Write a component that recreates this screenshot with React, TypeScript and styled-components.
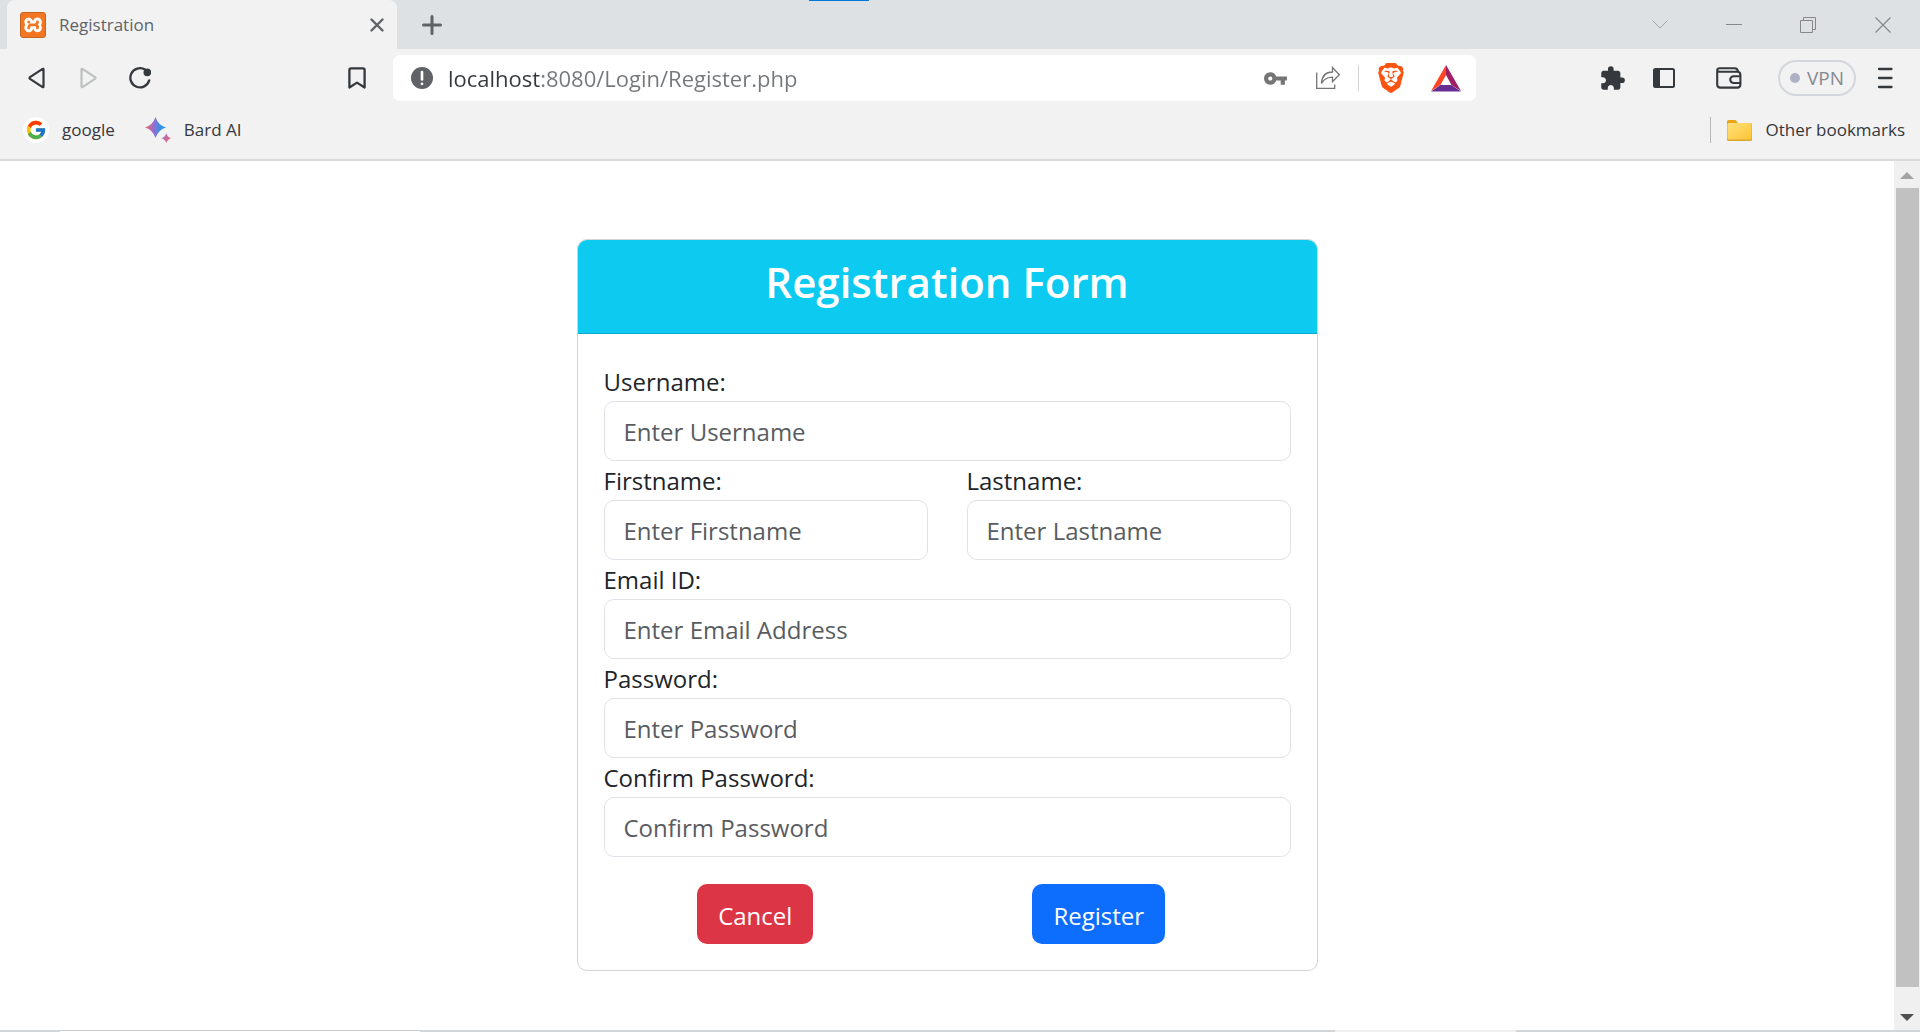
import React from 'react';
import styled, { createGlobalStyle } from 'styled-components';
import { SiBrave, SiXampp } from 'react-icons/si';
import { FcGoogle } from 'react-icons/fc';
import { MdVpnKey, MdExtension } from 'react-icons/md';

const GlobalStyle = createGlobalStyle`
  *, *::before, *::after { box-sizing: border-box; }
  html, body, #root { height: 100%; }
  body {
    margin: 0;
    background: #fff;
    color: #212529;
    font-family: 'Open Sans', 'Noto Sans', sans-serif;
    overflow: hidden;
  }
  button, input { font-family: inherit; }
`;

const Window = styled.div`
  display: flex;
  flex-direction: column;
  height: 100%;
`;

const TabStrip = styled.header`
  position: relative;
  display: flex;
  align-items: stretch;
  height: 49px;
  padding-left: 7px;
  background: #dee1e4;
`;

const LoadMark = styled.div`
  position: absolute;
  top: 0;
  left: 809px;
  width: 60px;
  height: 1px;
  background: #0078d7;
`;

const Tab = styled.div`
  display: flex;
  align-items: center;
  gap: 13px;
  width: 390px;
  padding: 0 6px 0 13px;
  border-radius: 8px 8px 0 0;
  background: #f2f2f2;
`;

const TabTitle = styled.span`
  flex: 1;
  color: #5f6368;
  font-size: 17px;
  line-height: 24px;
`;

const Favicon = styled.span`
  display: flex;
  align-items: center;
  justify-content: center;
  width: 26px;
  height: 26px;
  border: 1px solid #c4651f;
  border-radius: 3px;
  background: linear-gradient(#fff, #fff) center / 20px 20px no-repeat #f37623;
  color: #f37623;
`;

const IconButton = styled.button<{ $width?: number; $color?: string }>`
  display: flex;
  align-items: center;
  justify-content: center;
  flex: none;
  width: ${(p) => p.$width ?? 44}px;
  height: 40px;
  padding: 0;
  border: 0;
  background: transparent;
  color: ${(p) => p.$color ?? '#35383c'};
`;

const TabButton = styled(IconButton)`
  align-self: center;
`;

const WindowControls = styled.div`
  display: flex;
  align-items: center;
  margin-left: auto;
`;

const Toolbar = styled.nav`
  display: flex;
  align-items: center;
  height: 58px;
  padding: 0 13px 0 14px;
  background: #f2f2f2;
`;

const NavButtons = styled.div`
  display: flex;
  gap: 8px;
  width: 365px;
  margin-right: 14px;

  & > :last-child { margin-left: auto; }
`;

const AddressBar = styled.div`
  display: flex;
  flex: 1;
  align-items: center;
  height: 46px;
  padding: 0 6px 0 18px;
  border-radius: 7px;
  background: #fff;
`;

const AddressInput = styled.input`
  flex: 1;
  min-width: 0;
  margin-left: 15px;
  padding: 0;
  border: 0;
  outline: 0;
  font-size: 22px;
  line-height: 32px;
  color: #75787b;
  background: linear-gradient(90deg, #35383c 94px, #75787b 94px);
  background-clip: text;
  -webkit-background-clip: text;
  -webkit-text-fill-color: transparent;
`;

const Divider = styled.span<{ $color: string }>`
  flex: none;
  width: 1px;
  height: 26px;
  background: ${(p) => p.$color};
`;

const Actions = styled.div`
  display: flex;
  align-items: center;
  margin-left: 114px;
`;

const ActionGroup = styled.div`
  display: flex;
  gap: 8px;
  margin-right: 21px;
`;

const VpnButton = styled.button`
  display: flex;
  align-items: center;
  justify-content: center;
  gap: 7px;
  width: 78px;
  height: 36px;
  margin: 0 7px 0 27px;
  padding: 0;
  border: 2px solid #d3d7dc;
  border-radius: 18px;
  background: transparent;
  color: #868a90;
  font-size: 19px;
  line-height: 24px;
`;

const VpnDot = styled.span`
  width: 10px;
  height: 10px;
  border-radius: 50%;
  background: #aeb0c4;
`;

const Bookmarks = styled.nav`
  display: flex;
  align-items: center;
  height: 54px;
  padding: 0 15px 6px 23px;
  border-bottom: 2px solid #d6d8db;
  background: #f2f2f2;
`;

const Bookmark = styled.a`
  display: flex;
  align-items: center;
  gap: 13px;
  margin-right: 30px;
  color: #35383c;
  font-size: 17px;
  line-height: 24px;
  text-decoration: none;

  &:last-child { margin: 0 0 0 16px; }
`;

const RoundIcon = styled.span`
  display: flex;
  align-items: center;
  justify-content: center;
  width: 26px;
  height: 26px;
  border-radius: 50%;
  background: #fff;
`;

const Spacer = styled.span`
  flex: 1;
`;

const Viewport = styled.div`
  display: flex;
  flex: 1;
  min-height: 0;
`;

const Page = styled.main`
  flex: 1;
  padding: 78px 24px 0;
  overflow: hidden;
`;

const Scrollbar = styled.div`
  display: flex;
  flex-direction: column;
  width: 26px;
  background: #f0f0f0;
`;

const ScrollThumb = styled.div`
  flex: 1;
  margin: 0 1px 16px 2px;
  background: #c1c1c1;
`;

const ScrollArrow = styled.button<{ $color: string }>`
  display: flex;
  align-items: center;
  justify-content: center;
  height: 27px;
  padding: 2px 0 0;
  border: 0;
  background: transparent;
  color: ${(p) => p.$color};
`;

const Shelf = styled.footer`
  display: flex;
  justify-content: space-between;
  height: 2px;
  padding: 0 404px 0 60px;
  background: #d2d6d9;
`;

const ShelfItem = styled.span<{ $width: number; $top: string; $fill: string }>`
  width: ${(p) => p.$width}px;
  border-top: 1px solid ${(p) => p.$top};
  background: ${(p) => p.$fill};
`;

const Card = styled.section`
  max-width: 741px;
  margin: 0 auto;
  border: 1px solid #d3d3d4;
  border-radius: 10px;
  overflow: hidden;
`;

const CardHeader = styled.div`
  padding: 14px 26px 23px;
  border-bottom: 1px solid #0ca9ca;
  background: #0dcaf0;
`;

const Title = styled.h1`
  margin: 0;
  color: #fff;
  font-size: 42px;
  font-weight: 600;
  line-height: 56px;
  text-align: center;
`;

const Form = styled.form`
  padding: 28px 26px 26px;
`;

const Row = styled.div`
  display: grid;
  grid-template-columns: 1fr 1fr;
  column-gap: 39px;
`;

const Field = styled.label`
  display: block;
  min-width: 0;
  font-size: 24px;
  line-height: 39px;
`;

const TextInput = styled.input`
  display: block;
  width: 100%;
  height: 60px;
  padding: 0 19px;
  border: 1px solid #dee2e6;
  border-radius: 10px;
  outline: 0;
  background: #fff;
  color: #212529;
  font-size: 24px;
  line-height: 36px;

  &::placeholder {
    color: #595c5f;
    opacity: 1;
  }
`;

const ButtonRow = styled.div`
  display: grid;
  grid-template-columns: 1fr 1fr;
  margin-top: 27px;
`;

const ButtonCell = styled.div`
  display: flex;
  justify-content: center;
  padding-right: 40px;
`;

const FormButton = styled.button<{ $color: string }>`
  height: 60px;
  padding: 4px 21px 0;
  border: 0;
  border-radius: 10px;
  background: ${(p) => p.$color};
  color: #fff;
  font-size: 24px;
  line-height: 36px;
`;

const CrossIcon = () => (
  <svg width="14" height="14" viewBox="0 0 14 14" stroke="currentColor" strokeWidth="2.4" strokeLinecap="round">
    <path d="M1.5 1.5l11 11M12.5 1.5l-11 11" />
  </svg>
);

const PlusIcon = () => (
  <svg width="20" height="20" viewBox="0 0 20 20" stroke="currentColor" strokeWidth="3" strokeLinecap="round">
    <path d="M10 1.5v17M1.5 10h17" />
  </svg>
);

const ChevronIcon = () => (
  <svg width="16" height="9" viewBox="0 0 16 9" fill="none" stroke="currentColor" strokeWidth="1">
    <path d="M0.5 0.5L8 8L15.5 0.5" />
  </svg>
);

const MinimizeIcon = () => (
  <svg width="16" height="1" viewBox="0 0 16 1"><path d="M0 0h16v1H0z" fill="currentColor" /></svg>
);

const RestoreIcon = () => (
  <svg width="16" height="16" viewBox="0 0 16 16" fill="none" stroke="currentColor">
    <path d="M0.5 3.5h12v12h-12zM3.5 3.5v-3h12v12h-3" />
  </svg>
);

const CloseIcon = () => (
  <svg width="16" height="16" viewBox="0 0 16 16" stroke="currentColor" strokeWidth="1.2">
    <path d="M0.5 0.5l15 15M15.5 0.5l-15 15" />
  </svg>
);

const TriangleIcon = ({ flip = false }: { flip?: boolean }) => (
  <svg width="17" height="22" viewBox="0 0 17 22" fill="none" stroke="currentColor" strokeWidth="2.2" strokeLinejoin="round">
    <path d={flip ? 'M1.5 2.4v17.2q0 1 .9.5L15 11.8q1-.8 0-1.6L2.4 1.9q-.9-.5-.9.5z' : 'M15.5 2.4v17.2q0 1-.9.5L2 11.8q-1-.8 0-1.6L14.6 1.9q.9-.5.9.5z'} />
  </svg>
);

const ReloadIcon = () => (
  <svg width="22" height="22" viewBox="0 0 22 22" fill="none">
    <path d="M20.2 13.4A9.6 9.6 0 1 1 16 2.6" stroke="currentColor" strokeWidth="2.3" strokeLinecap="round" />
    <circle cx="18.3" cy="5.4" r="3.8" fill="currentColor" />
  </svg>
);

const BookmarkIcon = () => (
  <svg width="18" height="22" viewBox="0 0 18 22" fill="none" stroke="currentColor" strokeWidth="2.3" strokeLinejoin="round">
    <path d="M1.4 20.5V3q0-1.6 1.6-1.6h12q1.6 0 1.6 1.6v17.5L9 15.6z" />
  </svg>
);

const InfoIcon = () => (
  <svg width="22" height="22" viewBox="0 0 22 22">
    <circle cx="11" cy="11" r="11" fill="#5f6368" />
    <path d="M11 5v7.5" stroke="#fff" strokeWidth="2.6" strokeLinecap="round" />
    <circle cx="11" cy="16.8" r="1.4" fill="#fff" />
  </svg>
);

const ShareIcon = () => (
  <svg width="24" height="24" viewBox="0 0 24 24" fill="none" stroke="currentColor" strokeWidth="1.3">
    <path d="M0.7 6.500v15.900h18v-4" />
    <path d="M5.5 17.5C5.8 10 10 6 16.5 6V1.5l6.8 7.2-6.8 7v-4.5c-5 0-8.5 1.8-11 6.3z" />
  </svg>
);

const BatIcon = () => (
  <svg width="30" height="27" viewBox="0 0 30 27">
    <path d="M15 0L0 26l9.5-6L15 10z" fill="#ff4724" />
    <path d="M15 0l15 26-9.5-6L15 10z" fill="#9e1f63" />
    <path d="M0 26.5h30L20.5 20h-11z" fill="#662d91" />
  </svg>
);

const PanelIcon = () => (
  <svg width="22" height="20" viewBox="0 0 22 20">
    <rect x="1" y="1" width="20" height="18" rx="1.5" fill="none" stroke="currentColor" strokeWidth="2" />
    <path d="M1 1h6v18H1z" fill="currentColor" />
  </svg>
);

const WalletIcon = () => (
  <svg width="26" height="22" viewBox="0 0 26 22" fill="none" stroke="currentColor" strokeWidth="2.1">
    <path d="M1.2 4.2v13.3q0 3.1 3.1 3.1h17q3.1 0 3.1-3.1v-9.6q0-3.2-3.1-3.2H3.8Q1.2 4.7 1.2 3t2.6-1.8h15q2.6 0 3.4 3.5" />
    <path d="M24.8 9.2h-7.2a3.4 3.4 0 0 0 0 6.8h7.2" />
  </svg>
);

const MenuIcon = () => (
  <svg width="16" height="22" viewBox="0 0 16 22" stroke="currentColor" strokeWidth="2.3" strokeLinecap="round">
    <path d="M2 2h12.5M2 11h12.5M2 20h12.5" />
  </svg>
);

const BardIcon = () => (
  <svg width="26" height="26" viewBox="0 0 26 26">
    <defs>
      <linearGradient id="sparkLarge" x1="0" x2="1">
        <stop offset="0" stopColor="#ef6a5c" />
        <stop offset="0.4" stopColor="#9a6dd0" />
        <stop offset="0.75" stopColor="#2f94e8" />
        <stop offset="1" stopColor="#3b8df0" />
      </linearGradient>
      <linearGradient id="sparkSmall" x1="0" x2="1" y1="0" y2="1">
        <stop offset="0" stopColor="#9b75dc" />
        <stop offset="1" stopColor="#f2635a" />
      </linearGradient>
    </defs>
    <path d="M10.5 0q2.500 8 10.500 10.500-8 2.500-10.500 10.500Q8 13 0 10.500 8 8 10.500 0z" fill="url(#sparkLarge)" />
    <path d="M21.3 16.300q1.200 3.800 4.700 4.900-3.500 1-4.700 4.800-1.200-3.800-4.800-4.800 3.600-1.100 4.800-4.900z" fill="url(#sparkSmall)" />
  </svg>
);

const FolderIcon = () => (
  <svg width="25" height="21" viewBox="0 0 25 21">
    <defs>
      <linearGradient id="folderFace" x1="0" x2="1" y1="0" y2="1">
        <stop offset="0" stopColor="#ffe07a" />
        <stop offset="1" stopColor="#fcc536" />
      </linearGradient>
    </defs>
    <path d="M0 6V1.5Q0 0 1.5 0H8.5l2.5 3v3z" fill="#e8a317" />
    <rect y="3" width="25" height="18" rx="1.5" fill="#d9a62e" />
    <rect x="0.5" y="3" width="24" height="16.5" rx="1.5" fill="url(#folderFace)" />
  </svg>
);

const ArrowGlyph = ({ down = false }: { down?: boolean }) => (
  <svg width="14" height="7" viewBox="0 0 14 7">
    <path d={down ? 'M0 0h14L7 7z' : 'M0 7h14L7 0z'} fill="currentColor" />
  </svg>
);

type TextFieldProps = { label: string; placeholder: string; type?: string };

const TextField = ({ label, placeholder, type = 'text' }: TextFieldProps) => (
  <Field>
    {label}
    <TextInput type={type} placeholder={placeholder} />
  </Field>
);

export default function App() {
  return (
    <>
      <GlobalStyle />
      <Window>
        <TabStrip>
          <Tab>
            <Favicon><SiXampp size={24} /></Favicon>
            <TabTitle>Registration</TabTitle>
            <TabButton $width={28} $color="#5f6368" aria-label="Close tab"><CrossIcon /></TabButton>
          </Tab>
          <TabButton $width={70} $color="#5f6368" aria-label="New tab"><PlusIcon /></TabButton>
          <LoadMark />
          <WindowControls>
            <IconButton $width={74} $color="#a3a5a8" aria-label="Search tabs"><ChevronIcon /></IconButton>
            <IconButton $width={74} $color="#85878a" aria-label="Minimize"><MinimizeIcon /></IconButton>
            <IconButton $width={74} $color="#85878a" aria-label="Restore"><RestoreIcon /></IconButton>
            <IconButton $width={75} $color="#85878a" aria-label="Close"><CloseIcon /></IconButton>
          </WindowControls>
        </TabStrip>

        <Toolbar>
          <NavButtons>
            <IconButton aria-label="Back"><TriangleIcon /></IconButton>
            <IconButton $color="#bfc0c1" aria-label="Forward"><TriangleIcon flip /></IconButton>
            <IconButton aria-label="Reload"><ReloadIcon /></IconButton>
            <IconButton aria-label="Bookmark this page"><BookmarkIcon /></IconButton>
          </NavButtons>
          <AddressBar>
            <InfoIcon />
            <AddressInput aria-label="Address" defaultValue="localhost:8080/Login/Register.php" />
            <IconButton $width={46} $color="#757575" aria-label="Passwords"><MdVpnKey size={25} /></IconButton>
            <IconButton $width={60} $color="#757575" aria-label="Share"><ShareIcon /></IconButton>
            <Divider $color="#cfd1d3" />
            <IconButton $width={63} $color="#fb5411" aria-label="Brave Shields"><SiBrave size={30} /></IconButton>
            <IconButton $width={48} aria-label="Brave Rewards"><BatIcon /></IconButton>
          </AddressBar>
          <Actions>
            <ActionGroup>
              <IconButton aria-label="Extensions"><MdExtension size={27} /></IconButton>
              <IconButton aria-label="Sidebar"><PanelIcon /></IconButton>
            </ActionGroup>
            <IconButton aria-label="Wallet"><WalletIcon /></IconButton>
            <VpnButton><VpnDot />VPN</VpnButton>
            <IconButton aria-label="Menu"><MenuIcon /></IconButton>
          </Actions>
        </Toolbar>

        <Bookmarks>
          <Bookmark href="#google"><RoundIcon><FcGoogle size={22} /></RoundIcon>google</Bookmark>
          <Bookmark href="#bard"><BardIcon />Bard AI</Bookmark>
          <Spacer />
          <Divider $color="#b5b7b9" />
          <Bookmark href="#other"><FolderIcon />Other bookmarks</Bookmark>
        </Bookmarks>

        <Viewport>
          <Page>
            <Card>
              <CardHeader><Title>Registration Form</Title></CardHeader>
              <Form>
                <TextField label="Username:" placeholder="Enter Username" />
                <Row>
                  <TextField label="Firstname:" placeholder="Enter Firstname" />
                  <TextField label="Lastname:" placeholder="Enter Lastname" />
                </Row>
                <TextField label="Email ID:" placeholder="Enter Email Address" type="email" />
                <TextField label="Password:" placeholder="Enter Password" type="password" />
                <TextField label="Confirm Password:" placeholder="Confirm Password" type="password" />
                <ButtonRow>
                  <ButtonCell><FormButton type="button" $color="#dc3545">Cancel</FormButton></ButtonCell>
                  <ButtonCell><FormButton type="submit" $color="#0d6efd">Register</FormButton></ButtonCell>
                </ButtonRow>
              </Form>
            </Card>
          </Page>
          <Scrollbar>
            <ScrollArrow $color="#a3a3a3" aria-label="Scroll up"><ArrowGlyph /></ScrollArrow>
            <ScrollThumb />
            <ScrollArrow $color="#505050" aria-label="Scroll down"><ArrowGlyph down /></ScrollArrow>
          </Scrollbar>
        </Viewport>

        <Shelf>
          <ShelfItem $width={360} $top="#c8c8cb" $fill="#ffffff" />
          <ShelfItem $width={181} $top="#efeff0" $fill="#efeff0" />
        </Shelf>
      </Window>
    </>
  );
}
